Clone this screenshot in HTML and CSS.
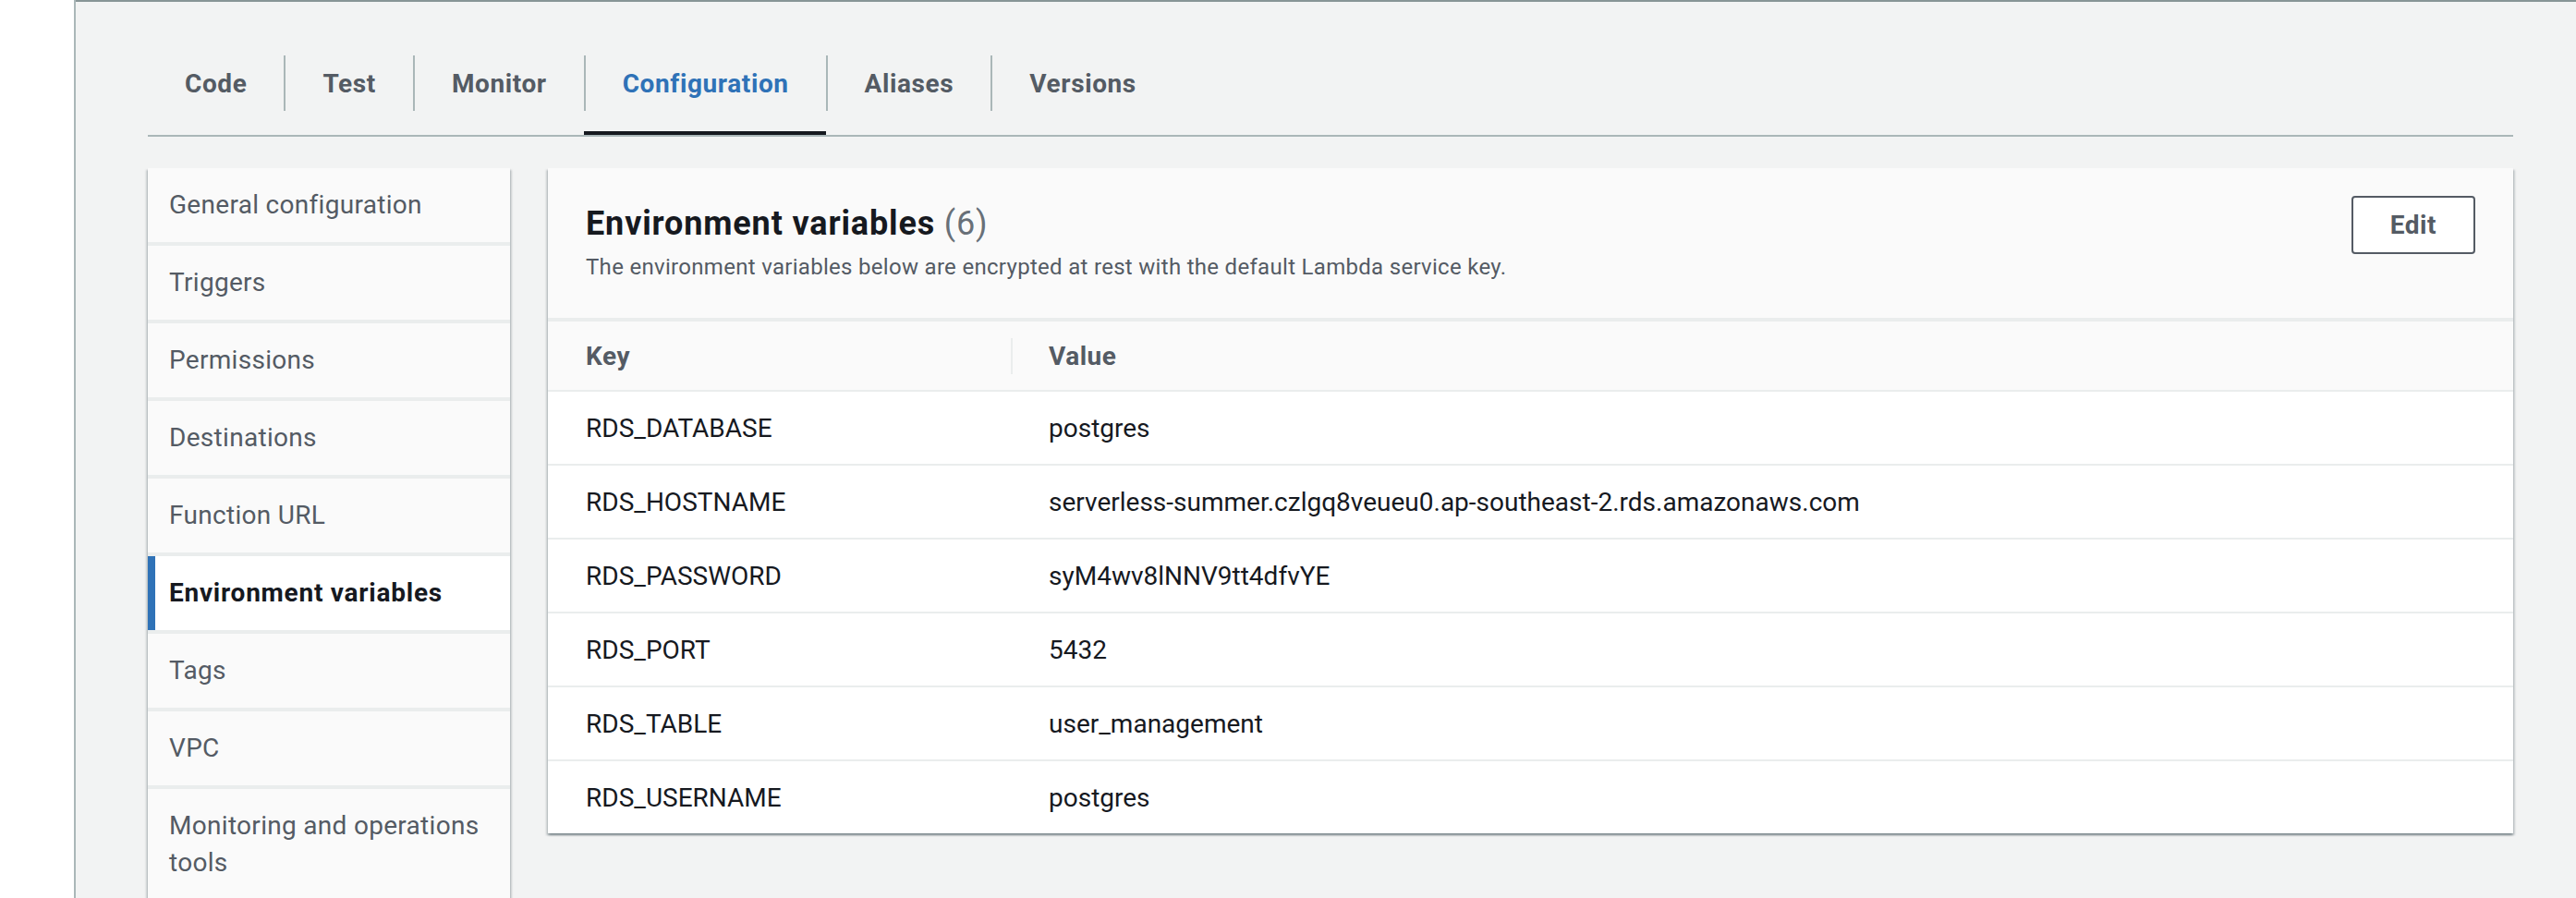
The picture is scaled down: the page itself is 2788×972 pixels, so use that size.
FILE: index.html
```html
<!DOCTYPE html>
<html lang="en">
<head>
<meta charset="utf-8">
<title>Lambda configuration - Environment variables</title>
<link rel="stylesheet" href="styles.css">
</head>
<body>
<div class="app">
  <div class="gutter"></div>
  <main class="main">
    <nav class="tabs">
      <div class="tab"><span class="tab-label">Code</span></div>
      <div class="tab"><span class="tab-label sep">Test</span></div>
      <div class="tab"><span class="tab-label sep">Monitor</span></div>
      <div class="tab active"><span class="tab-label sep">Configuration</span></div>
      <div class="tab"><span class="tab-label sep">Aliases</span></div>
      <div class="tab"><span class="tab-label sep">Versions</span></div>
    </nav>
    <div class="content">
      <aside class="sidenav">
        <div class="nav-item">General configuration</div>
        <div class="nav-item">Triggers</div>
        <div class="nav-item">Permissions</div>
        <div class="nav-item">Destinations</div>
        <div class="nav-item">Function URL</div>
        <div class="nav-item active">Environment variables</div>
        <div class="nav-item">Tags</div>
        <div class="nav-item">VPC</div>
        <div class="nav-item">Monitoring and operations tools</div>
      </aside>
      <section class="panel">
        <header class="panel-header">
          <div class="titles">
            <h2 class="title">Environment variables <span class="count">(6)</span></h2>
            <p class="subtitle">The environment variables below are encrypted at rest with the default Lambda service key.</p>
          </div>
          <button class="btn">Edit</button>
        </header>
        <div class="table">
          <div class="thead">
            <div class="th">Key</div>
            <div class="th th-value">Value</div>
          </div>
          <div class="tr"><div class="td">RDS_DATABASE</div><div class="td">postgres</div></div>
          <div class="tr"><div class="td">RDS_HOSTNAME</div><div class="td">serverless-summer.czlgq8veueu0.ap-southeast-2.rds.amazonaws.com</div></div>
          <div class="tr"><div class="td">RDS_PASSWORD</div><div class="td">syM4wv8lNNV9tt4dfvYE</div></div>
          <div class="tr"><div class="td">RDS_PORT</div><div class="td">5432</div></div>
          <div class="tr"><div class="td">RDS_TABLE</div><div class="td">user_management</div></div>
          <div class="tr"><div class="td">RDS_USERNAME</div><div class="td">postgres</div></div>
        </div>
      </section>
    </div>
  </main>
</div>
</body>
</html>
```

FILE: styles.css
```css
html, body {
  margin: 0;
  padding: 0;
  height: 100%;
}

body {
  font-family: Roboto, "Liberation Sans", Arial, sans-serif;
  background: #ffffff;
  overflow: hidden;
}

.app {
  display: flex;
  min-height: 972px;
}

.gutter {
  width: 80px;
  flex: none;
  background: #ffffff;
  border-right: 2px solid #aab7b8;
}

.main {
  flex: 1;
  min-width: 0;
  background: #f2f3f3;
  border-top: 2px solid #879596;
  padding: 58px 68px 0 78px;
}

/* Tabs */
.tabs {
  display: flex;
  border-bottom: 2px solid #aab7b8;
}

.tab {
  padding-bottom: 22px;
  border-bottom: 4px solid transparent;
}

.tab.active {
  border-bottom-color: #16191f;
}

.tab-label {
  height: 60px;
  display: flex;
  align-items: center;
  padding: 0 40px;
  font-size: 28px;
  font-weight: 700;
  letter-spacing: 0.6px;
  color: #545b64;
}

.tab-label.sep {
  border-left: 2px solid #aab7b8;
}

.tab.active .tab-label {
  color: #2f72b7;
}

/* Content */
.content {
  display: flex;
  align-items: flex-start;
  gap: 41px;
  margin-top: 34px;
}

.sidenav {
  width: 392px;
  flex: none;
  display: flex;
  flex-direction: column;
  gap: 4px;
  background: #eaeded;
  box-shadow: 0 2px 2px 0 rgba(0, 28, 36, 0.3), 2px 2px 2px 0 rgba(0, 28, 36, 0.15), -2px 2px 2px 0 rgba(0, 28, 36, 0.15);
}

.nav-item {
  padding: 20px 24px 20px 23px;
  font-size: 28px;
  line-height: 40px;
  letter-spacing: 0.3px;
  color: #545b64;
  background: #fafafa;
}

.nav-item.active {
  background: #ffffff;
  color: #16191f;
  font-weight: 700;
  letter-spacing: 0.75px;
  border-left: 8px solid #2f72b7;
  padding-left: 15px;
}

/* Panel */
.panel {
  flex: 1;
  min-width: 0;
  background: #ffffff;
  box-shadow: 0 2px 2px 0 rgba(0, 28, 36, 0.3), 2px 2px 2px 0 rgba(0, 28, 36, 0.15), -2px 2px 2px 0 rgba(0, 28, 36, 0.15);
}

.panel-header {
  display: flex;
  justify-content: space-between;
  align-items: flex-start;
  padding: 30px 41px 39px;
  background: #fafafa;
  border-bottom: 4px solid #eaeded;
}

.titles {
  margin-top: 8px;
}

.title {
  margin: 0;
  font-size: 36px;
  line-height: 44px;
  font-weight: 700;
  letter-spacing: 0.85px;
  color: #16191f;
}

.count {
  font-weight: 400;
  color: #687078;
}

.subtitle {
  margin: 9px 0 0;
  font-size: 24px;
  line-height: 32px;
  letter-spacing: 0.3px;
  color: #545b64;
}

.btn {
  height: 63px;
  padding: 0 40px;
  background: #ffffff;
  border: 2px solid #545b64;
  border-radius: 4px;
  font-family: inherit;
  font-size: 28px;
  font-weight: 700;
  letter-spacing: 0.5px;
  color: #545b64;
}

/* Table */
.thead,
.tr {
  display: grid;
  grid-template-columns: 501px 1fr;
}

.thead {
  height: 74px;
  background: #fafafa;
}

.th {
  display: flex;
  align-items: center;
  align-self: center;
  height: 39px;
  padding-left: 41px;
  font-size: 28px;
  font-weight: 700;
  letter-spacing: 0.5px;
  color: #545b64;
}

.th-value {
  border-left: 2px solid #eaeded;
  padding-left: 39px;
}

.tr {
  height: 78px;
  border-top: 2px solid #eaeded;
  background: #ffffff;
}

.td {
  display: flex;
  align-items: center;
  padding-left: 41px;
  font-size: 28px;
  color: #16191f;
}
```
